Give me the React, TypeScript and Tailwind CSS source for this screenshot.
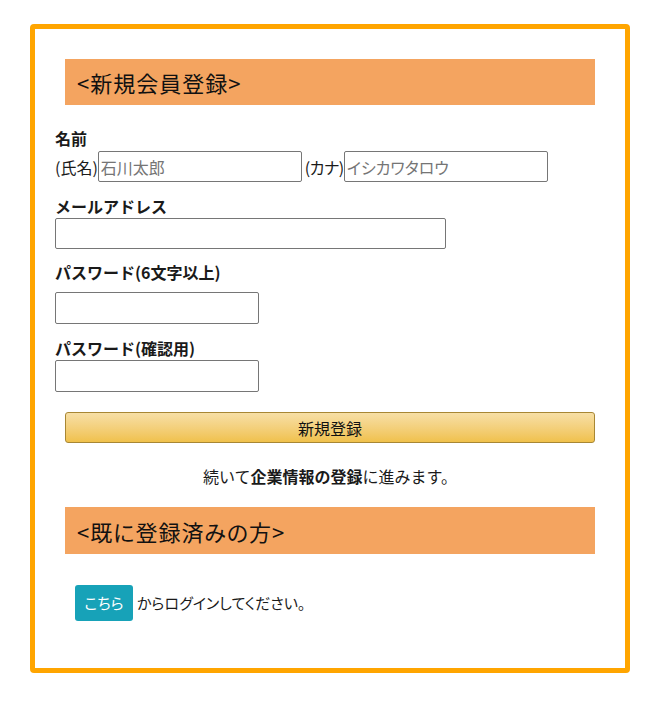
export default function App() {
  const font = { fontFamily: '"Noto Sans CJK JP", "Noto Sans", sans-serif' };
  const inputCls =
    "h-[31px] border border-[#767676] rounded-[2px] px-[2px] text-[16px] placeholder:text-[#757575] outline-none";
  return (
    <div className="min-h-screen bg-white pt-[24px] pl-[30px]" style={font}>
      <div className="w-[600px] h-[649px] border-[5px] border-[#ffa500] rounded-[4px] px-[20px] pt-[30px] text-[#1a1a1a]">
        <h2 className="mx-[10px] h-[46px] bg-[#f4a460] flex items-center pl-[12px] text-[22px] tracking-[1px] leading-none text-[#111]">
          &lt;新規会員登録&gt;
        </h2>

        <div className="mt-[22px] text-[16px] font-bold leading-[22px] h-[22px]">名前</div>
        <div className="mt-[2px] flex items-center h-[31px] text-[16px]">
          <span>(氏名)</span>
          <input className={`w-[204px] ${inputCls}`} placeholder="石川太郎" />
          <span className="ml-[3px] tracking-[-0.5px] [font-feature-settings:'palt']">(カナ)</span>
          <input
            className={`w-[204px] ${inputCls} [font-feature-settings:'palt']`}
            placeholder="イシカワタロウ"
          />
        </div>

        <div className="mt-[13px] text-[16px] font-bold leading-[22px] h-[22px]">メールアドレス</div>
        <input className="mt-[1px] block w-[391px] h-[31px] border border-[#767676] rounded-[2px] outline-none" />

        <div className="mt-[12px] text-[16px] font-bold leading-[22px] h-[22px]">パスワード(6文字以上)</div>
        <input
          type="password"
          className="mt-[9px] block w-[204px] h-[32px] border border-[#767676] rounded-[2px] outline-none"
        />

        <div className="mt-[13px] text-[16px] font-bold leading-[22px] h-[22px]">パスワード(確認用)</div>
        <input
          type="password"
          className="mt-[1px] block w-[204px] h-[32px] border border-[#767676] rounded-[2px] outline-none"
        />

        <button className="mt-[20px] mx-[10px] block w-[530px] h-[31px] rounded-[3px] border border-[#a88734] bg-gradient-to-b from-[#f7dfa5] to-[#f0c14b] text-[16px] text-[#111]">
          新規登録
        </button>

        <p className="mt-[22px] text-center text-[16px] leading-[22px]">
          続いて<span className="font-bold">企業情報の登録</span>に進みます。
        </p>

        <h2 className="mt-[20px] mx-[10px] h-[47px] bg-[#f4a460] flex items-center pl-[12px] text-[22px] tracking-[1px] leading-none text-[#111] [font-feature-settings:'palt']">
          &lt;既に登録済みの方&gt;
        </h2>

        <div className="mt-[31px] ml-[20px] flex items-center text-[15px] [font-feature-settings:'palt']">
          <button className="h-[36px] w-[58px] rounded-[3px] bg-[#17a2b8] text-white text-[15px]">こちら</button>
          <span className="ml-[4px]">からログインしてください。</span>
        </div>
      </div>
    </div>
  );
}
